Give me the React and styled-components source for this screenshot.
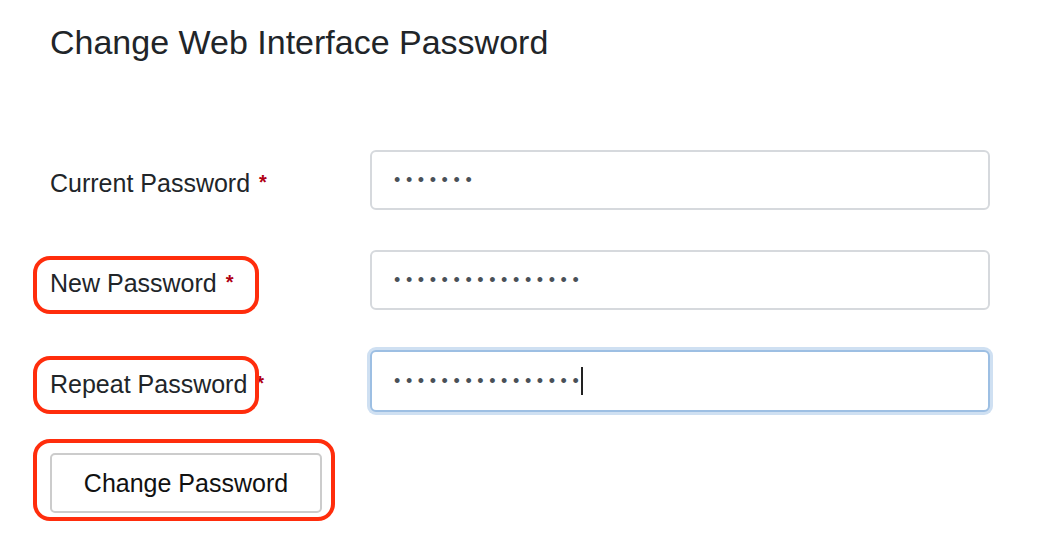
import styled, { createGlobalStyle, css } from "styled-components";

const GlobalStyle = createGlobalStyle`
  html, body {
    margin: 0;
    min-height: 100%;
    background: #ffffff;
    font-family: "Liberation Sans", Arial, sans-serif;
    color: #212529;
  }
`;

const fields = [
  { id: "current", label: "Current Password", value: "1234567" },
  { id: "new", label: "New Password", value: "1234567890123456", marked: true },
  {
    id: "repeat",
    label: "Repeat Password",
    value: "1234567890123456",
    marked: true,
    focused: true,
  },
];

export default function App() {
  return (
    <>
      <GlobalStyle />
      <StyledPage>
        <StyledTitle>Change Web Interface Password</StyledTitle>
        <StyledForm onSubmit={(e) => e.preventDefault()}>
          {fields.map((field) => (
            <StyledRow key={field.id}>
              <StyledLabelCell $marked={field.marked} $top={field.focused ? 5 : 6}>
                <StyledLabel htmlFor={field.id}>
                  {field.label} <StyledRequired>*</StyledRequired>
                </StyledLabel>
              </StyledLabelCell>
              <StyledInputWrap>
                <StyledInput
                  id={field.id}
                  type="password"
                  value={field.value}
                  readOnly
                  $focused={field.focused}
                />
                {field.focused && <StyledCaret />}
              </StyledInputWrap>
            </StyledRow>
          ))}
          <StyledButtonRow>
            <StyledButtonMark>
              <StyledButton type="submit">Change Password</StyledButton>
            </StyledButtonMark>
          </StyledButtonRow>
        </StyledForm>
      </StyledPage>
    </>
  );
}

const highlight = css`
  content: "";
  position: absolute;
  box-sizing: border-box;
  border: 4px solid #ff2d0c;
  border-radius: 17px;
  pointer-events: none;
`;

const StyledPage = styled.div`
  padding: 22px 0 40px 50px;
  width: 940px;
  min-height: 536px;
  box-sizing: border-box;
`;

const StyledTitle = styled.h2`
  margin: 0;
  font-size: 34px;
  font-weight: 400;
  line-height: 40px;
  color: #212529;
`;

const StyledForm = styled.form`
  margin-top: 88px;
  display: flex;
  flex-direction: column;
  gap: 40px;
`;

const StyledRow = styled.div`
  display: grid;
  grid-template-columns: 320px 620px;
  align-items: center;
  height: 60px;
`;

const StyledLabelCell = styled.div`
  position: relative;
  height: 60px;
  display: flex;
  align-items: center;
  ${({ $marked, $top }) =>
    $marked &&
    css`
      &::after {
        ${highlight}
        left: -17px;
        top: ${$top}px;
        width: 226px;
        height: 58px;
      }
    `}
`;

const StyledLabel = styled.label`
  font-size: 25px;
  line-height: 30px;
  color: #212529;
  padding-top: 5px;
`;

const StyledRequired = styled.span`
  color: #b00014;
  font-weight: 700;
  font-size: 20px;
  margin-left: 2px;
  vertical-align: 3px;
`;

const StyledInputWrap = styled.div`
  position: relative;
  display: flex;
  align-items: center;
`;

const StyledInput = styled.input`
  box-sizing: border-box;
  width: 620px;
  height: ${({ $focused }) => ($focused ? "62px" : "60px")};
  padding: 0 22px;
  font-size: 18px;
  letter-spacing: 5.6px;
  color: #495057;
  background: #ffffff;
  border: 2px solid #d6d9dd;
  border-radius: 6px;
  outline: none;
  font-family: "Liberation Sans", Arial, sans-serif;
  ${({ $focused }) =>
    $focused &&
    css`
      border-color: #9dbfe3;
      box-shadow: 0 0 0 3px #cfe0f2;
    `}
`;

const StyledCaret = styled.span`
  position: absolute;
  left: 211px;
  top: 17px;
  width: 2px;
  height: 28px;
  background: #222222;
`;

const StyledButtonRow = styled.div`
  margin-top: 3px;
  display: flex;
`;

const StyledButtonMark = styled.div`
  position: relative;
  &::after {
    ${highlight}
    left: -17px;
    top: -14px;
    width: 302px;
    height: 82px;
  }
`;

const StyledButton = styled.button`
  display: block;
  box-sizing: border-box;
  width: 272px;
  height: 60px;
  font-family: "Liberation Sans", Arial, sans-serif;
  font-size: 25px;
  color: #111111;
  background: #ffffff;
  border: 2px solid #cccccc;
  border-radius: 5px;
  cursor: pointer;
`;
